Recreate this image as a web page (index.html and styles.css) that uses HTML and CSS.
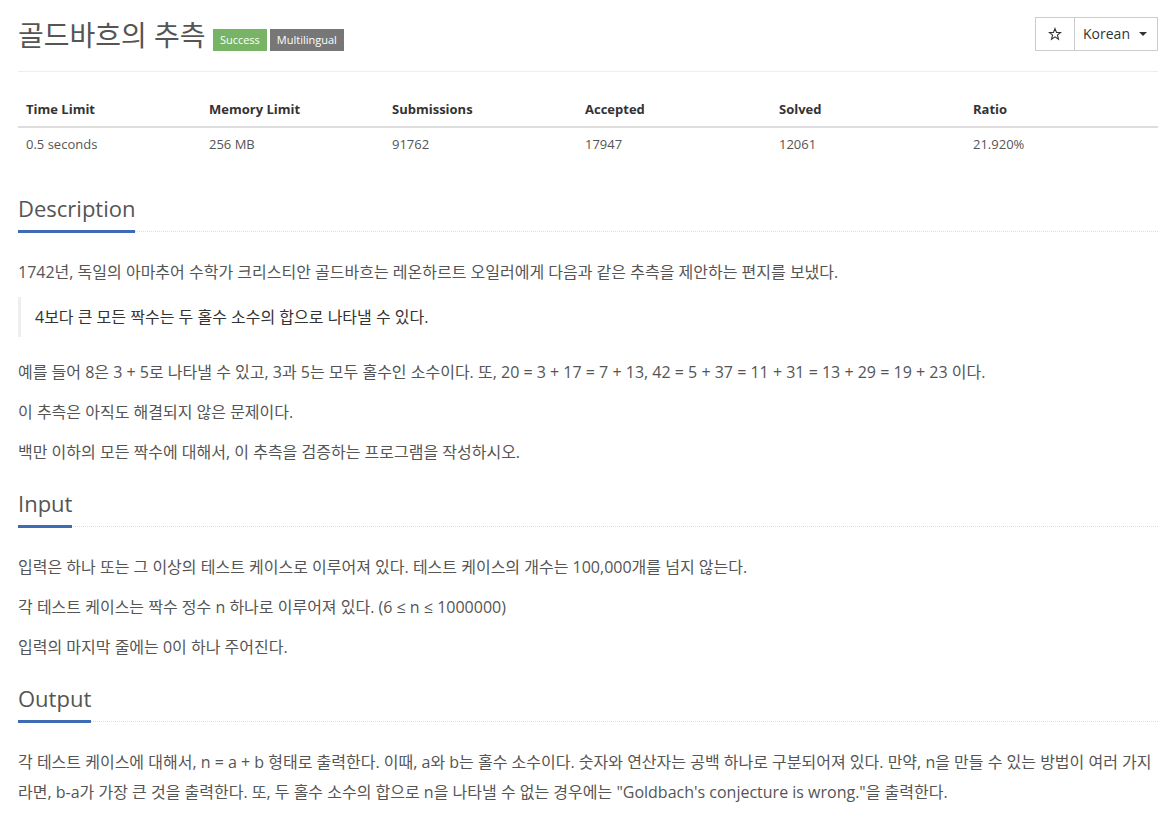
FILE: index.html
```html
<!DOCTYPE html>
<html lang="ko">
<head>
<meta charset="utf-8">
<title>골드바흐의 추측</title>
<link rel="stylesheet" href="styles.css">
</head>
<body>
<div class="container">
  <div class="page-header">
    <h1 class="title">골드바흐의 추측 <span class="label label-success">Success</span><span class="label label-gray">Multilingual</span></h1>
    <div class="btn-group">
      <button class="btn btn-star" type="button" aria-label="star">
        <svg width="14" height="14" viewBox="0 0 14 14"><path d="M7 1.6 L8.5 5.4 L12.6 5.5 L9.4 8.1 L10.5 12.2 L7 9.8 L3.5 12.2 L4.6 8.1 L1.4 5.5 L5.5 5.4 Z" fill="none" stroke="#333" stroke-width="1.1" stroke-linejoin="miter"/></svg>
      </button>
      <button class="btn btn-lang" type="button">Korean <span class="caret"></span></button>
    </div>
  </div>

  <table class="info-table">
    <thead>
      <tr>
        <th class="c1">Time Limit</th>
        <th class="c2">Memory Limit</th>
        <th class="c3">Submissions</th>
        <th class="c4">Accepted</th>
        <th class="c5">Solved</th>
        <th class="c6">Ratio</th>
      </tr>
    </thead>
    <tbody>
      <tr>
        <td>0.5 seconds</td>
        <td>256 MB</td>
        <td>91762</td>
        <td>17947</td>
        <td>12061</td>
        <td>21.920%</td>
      </tr>
    </tbody>
  </table>

  <section class="problem-section">
    <div class="headline"><h2>Description</h2></div>
    <div class="problem-text">
      <p>1742년, 독일의 아마추어 수학가 크리스티안 골드바흐는 레온하르트 오일러에게 다음과 같은 추측을 제안하는 편지를 보냈다.</p>
      <blockquote>4보다 큰 모든 짝수는 두 홀수 소수의 합으로 나타낼 수 있다.</blockquote>
      <p>예를 들어 8은 3 + 5로 나타낼 수 있고, 3과 5는 모두 홀수인 소수이다. 또, 20 = 3 + 17 = 7 + 13, 42 = 5 + 37 = 11 + 31 = 13 + 29 = 19 + 23 이다.</p>
      <p>이 추측은 아직도 해결되지 않은 문제이다.</p>
      <p>백만 이하의 모든 짝수에 대해서, 이 추측을 검증하는 프로그램을 작성하시오.</p>
    </div>
  </section>

  <section class="problem-section">
    <div class="headline"><h2>Input</h2></div>
    <div class="problem-text">
      <p>입력은 하나 또는 그 이상의 테스트 케이스로 이루어져 있다. 테스트 케이스의 개수는 100,000개를 넘지 않는다.</p>
      <p>각 테스트 케이스는 짝수 정수 n 하나로 이루어져 있다. (6 ≤ n ≤ 1000000)</p>
      <p>입력의 마지막 줄에는 0이 하나 주어진다.</p>
    </div>
  </section>

  <section class="problem-section">
    <div class="headline"><h2>Output</h2></div>
    <div class="problem-text">
      <p>각 테스트 케이스에 대해서, n = a + b 형태로 출력한다. 이때, a와 b는 홀수 소수이다. 숫자와 연산자는 공백 하나로 구분되어져 있다. 만약, n을 만들 수 있는 방법이 여러 가지라면, b-a가 가장 큰 것을 출력한다. 또, 두 홀수 소수의 합으로 n을 나타낼 수 없는 경우에는 "Goldbach's conjecture is wrong."을 출력한다.</p>
    </div>
  </section>
</div>
</body>
</html>
```
FILE: styles.css
```css
html, body {
  margin: 0;
  padding: 0;
  background: #fff;
}

body {
  font-family: "Open Sans", "Noto Sans CJK KR", sans-serif;
  color: #555;
  font-size: 14px;
  line-height: 1.42857;
}

.container {
  padding: 0 8px 0 18px;
}

.page-header {
  display: flex;
  justify-content: space-between;
  align-items: flex-start;
  border-bottom: 1px solid #eee;
  padding-bottom: 9px;
}

.title {
  margin: 19px 0 10px;
  font-size: 28px;
  line-height: 33px;
  font-weight: 400;
  color: #555;
}

.label {
  display: inline-block;
  font-size: 11px;
  line-height: 14px;
  padding: 4px 7px;
  color: #fff;
  vertical-align: 2px;
  margin-right: 3px;
}

.label-success {
  background: #78b465;
}

.label-gray {
  background: #777;
}

.btn-group {
  display: flex;
  margin-top: 17px;
}

.btn {
  font-family: "Open Sans", sans-serif;
  font-size: 14px;
  line-height: 20px;
  color: #333;
  background: #fff;
  border: 1px solid #ccc;
  display: flex;
  align-items: center;
  cursor: pointer;
  height: 34px;
}

.btn-star {
  width: 40px;
  padding: 0;
  justify-content: center;
}

.btn-star svg {
  display: block;
}

.btn-lang {
  margin-left: -1px;
  padding: 6px 10px 6px 8px;
}

.caret {
  display: inline-block;
  width: 0;
  height: 0;
  margin-left: 9px;
  border-top: 4px solid #333;
  border-left: 4px solid transparent;
  border-right: 4px solid transparent;
}

.info-table {
  width: 100%;
  border-collapse: collapse;
  margin: 21px 0 31px;
  font-size: 13px;
  line-height: 17px;
}

.info-table th {
  text-align: left;
  padding: 8px;
  font-weight: 700;
  color: #333;
  border-bottom: 2px solid #ddd;
}

.info-table td {
  padding: 8px;
  color: #555;
}

.info-table .c1 { width: 167px; }
.info-table .c2 { width: 167px; }
.info-table .c3 { width: 177px; }
.info-table .c4 { width: 178px; }
.info-table .c5 { width: 178px; }

.headline {
  margin: 20px 0 25px;
  border-bottom: 1px dotted #ddd;
}

.headline h2 {
  display: inline-block;
  margin: 0 0 -2px;
  padding-bottom: 5px;
  font-size: 22px;
  line-height: 33px;
  font-weight: 400;
  color: #555;
  border-bottom: 3px solid #3e6bb4;
}

.problem-text {
  font-size: 16px;
  line-height: 30px;
}

.problem-text p {
  margin: 0 0 10px;
}

.problem-text blockquote {
  margin: 0 0 20px;
  padding: 5px 14px;
  border-left: 3px solid #eee;
  color: #333;
}
```
